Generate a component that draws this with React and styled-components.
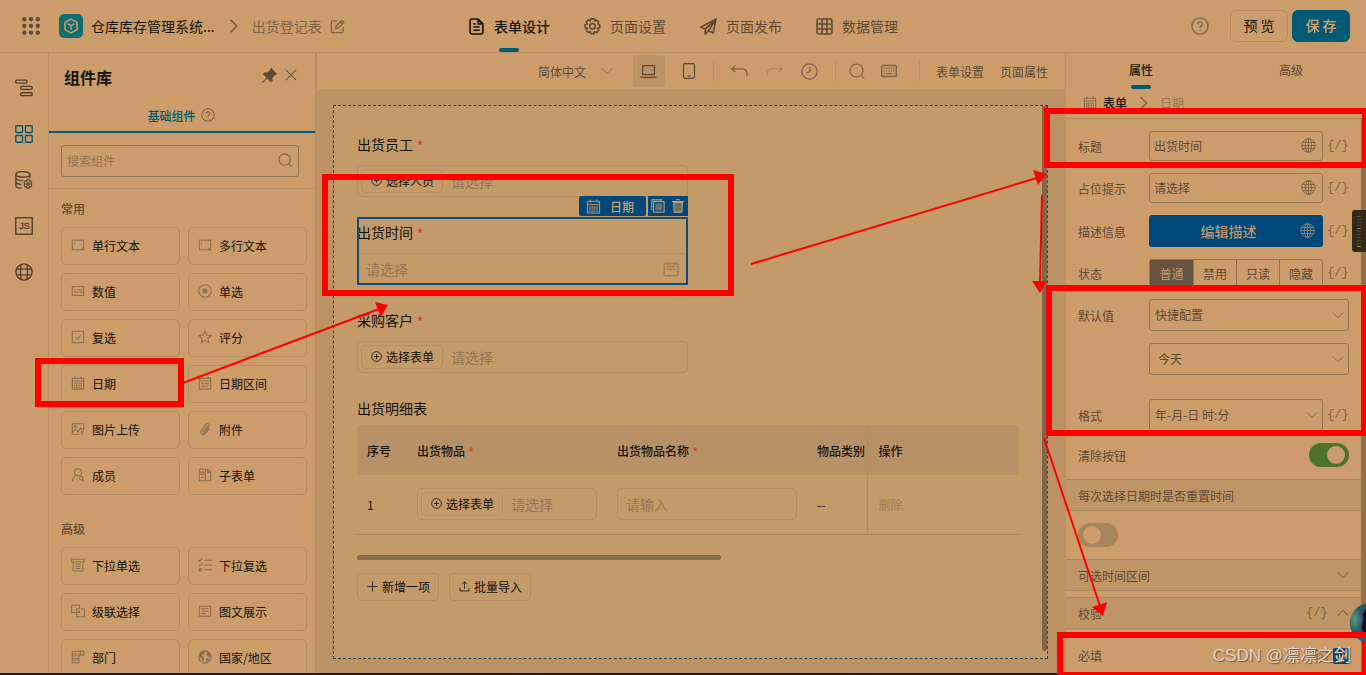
import React from "react";
import styled, { createGlobalStyle } from "styled-components";

const c = {
   panel: "#cc9d6a",
   shade: "#bd9264",
   canvas: "#c49a69",
   head: "#b99166",
   section: "#c09566",
   line: "#b98e60",
   lineDark: "#ad875b",
   border: "#b58c60",
   input: "#937551",
   text: "#15130f",
   sub: "#5e4a35",
   muted: "#806445",
   hint: "#977654",
   teal: "#005a73",
   blue: "#00477a",
   red: "#ff0000",
};

/* ---------- icons ---------- */

const shapes = {
   dots: [2, 8, 14].map((y) =>
      [2, 8, 14].map((x) => (
         <circle key={x + "-" + y} cx={x} cy={y} r="1.9" fill="currentColor" stroke="none" />
      ))
   ),
   cube: (
      <path d="M8 1.2 14 4.4v7.2L8 14.8 2 11.6V4.4zM4.500 5.600 8 7.600l3.500-2M8 7.600v4.200" strokeWidth="1.5" />
   ),
   right: <path d="m4 1 7 7-7 7" />,
   down: <path d="m2 5 6 6 6-6" />,
   up: <path d="m2 11 6-6 6 6" />,
   edit: <path d="M8 2H3a1.500 1.500 0 0 0-1.500 1.500V13A1.500 1.500 0 0 0 3 14.500h9.500A1.500 1.500 0 0 0 14 13V8.500M6 10.200l.5-2.700 6-6 2.200 2.200-6 6zM11 3l2.200 2.200" />,
   doc: <path d="M3 1h6.500L14 5.500V13.500A1.500 1.500 0 0 1 12.500 15h-9A1.500 1.500 0 0 1 2 13.500v-11A1.500 1.500 0 0 1 3 1zM9.500 1v4.500H14M5 5.500h2M5 8.500h6M5 11.500h6" />,
   gear: (
      <>
         <path d="M6.600.8h2.800l.6 1.800 1.700-.8 2 2-.8 1.700 1.900.8v2.800l-1.900.8.9 1.800-2 2-1.900-.9-.6 2H6.600l-.7-2-1.800.9-2-2 .9-1.800-2-.8V6.300l2-.8-.9-1.700 2-2 1.800.8z" />
         <circle cx="8" cy="7.800" r="2.600" />
      </>
   ),
   plane: <path d="M15 1 1 8.500l4 2V15l3-3 4.500 2zM5 10.500 15 1 8 12" />,
   grid: (
      <>
         <rect x="1" y="1" width="14" height="14" rx="1.500" />
         <path d="M1 5.700h14M1 10.300h14M5.700 1v14M10.300 1v14" />
      </>
   ),
   help: (
      <>
         <circle cx="8" cy="8" r="7.200" />
         <path d="M6 6.500a2 2 0 1 1 3 1.600c-.7.4-1 .8-1 1.600M8 11.300v1" />
      </>
   ),
   tree: (
      <>
         <rect x=".7" y="1" width="10" height="2.600" rx="1" />
         <rect x="5" y="6.600" width="10.300" height="2.600" rx="1" />
         <rect x="5" y="12.200" width="10.300" height="2.600" rx="1" />
      </>
   ),
   apps: (
      <>
         <rect x=".7" y=".7" width="6" height="6" rx=".6" />
         <rect x="9.300" y=".7" width="6" height="6" rx=".6" />
         <rect x=".7" y="9.300" width="6" height="6" rx=".6" />
         <rect x="9.300" y="9.300" width="6" height="6" rx=".6" />
      </>
   ),
   db: (
      <>
         <ellipse cx="7" cy="3" rx="6.200" ry="2.400" />
         <path d="M.8 3v10c0 1.200 2 2 5 2.200M13.200 3v3.500M.8 6.300c.4 1.300 3 2.200 6.200 2.200M.8 9.800c.4 1.200 2 2 4.700 2.200" />
         <circle cx="11.500" cy="11.500" r="1" />
         <path d="M10.700 7.800h1.600l.4 1.200 1.200-.3 1 1.500-.8 1.300.8 1.300-1 1.500-1.200-.3-.4 1.200h-1.600l-.4-1.200-1.200.3-1-1.500.8-1.300-.8-1.300 1-1.500 1.200.3z" strokeWidth="1" />
      </>
   ),
   js: (
      <>
         <rect x=".7" y=".7" width="14.600" height="14.600" />
         <text x="8.500" y="11" textAnchor="middle" fontSize="8" fontFamily="Liberation Sans, sans-serif" fill="currentColor" strokeWidth=".3">
            JS
         </text>
      </>
   ),
   globe: (
      <>
         <circle cx="8" cy="8" r="7.200" />
         <ellipse cx="8" cy="8" rx="3.400" ry="7.200" />
         <path d="M8 .8v14.400M1.600 4.800h12.800M.8 8h14.400M1.600 11.200h12.800" />
      </>
   ),
   web: (
      <>
         <circle cx="8" cy="8" r="7.200" />
         <path d="M5.500 1.200c-1 4.500-1 9 0 13.600M10.500 1.200c1 4.500 1 9 0 13.600M1.300 5.500h13.400M1.300 10.500h13.400" />
      </>
   ),
   pin: (
      <path fill="currentColor" d="M9.500 1 15 6.500l-1.500.6-3 3 .2 3L9.300 14 6 10.600 1.500 14.800l-.4-.3L5.300 10 2 6.700l1-1.300 3 .1 3-3z" strokeWidth=".4" />
   ),
   close: <path d="m2 2 12 12M14 2 2 14" />,
   search: (
      <>
         <circle cx="7.500" cy="7.500" r="6.500" />
         <path d="m12.300 12.300 3 3" />
      </>
   ),
   textbox: (
      <>
         <rect x="1.500" y="2.500" width="13" height="11" />
         <path d="M4 5v3M13.500 10.500v2h-2z" strokeWidth=".8" />
      </>
   ),
   number: (
      <>
         <rect x="1.500" y="3" width="13" height="10" />
         <text x="8" y="10.200" textAnchor="middle" fontSize="6" fontFamily="Liberation Sans, sans-serif" fill="currentColor" strokeWidth=".2">
            123
         </text>
      </>
   ),
   radio: (
      <>
         <circle cx="8" cy="8" r="7.200" />
         <circle cx="8" cy="8" r="2.800" fill="currentColor" stroke="none" />
      </>
   ),
   check: (
      <>
         <rect x="1.500" y="1.500" width="13" height="13" />
         <path d="m5 8 2.300 2.500 4-4.500" />
      </>
   ),
   star: <path d="m8 1.200 2 4.500 5 .5-3.700 3.300 1 4.900L8 11.900l-4.300 2.500 1-4.900L1 6.200l5-.5z" />,
   calendar: (
      <>
         <path d="M1.500 2.500h13v12.500h-13zM1.500 5.700h13M4.500 .5v3M11.500 .5v3" />
         <path d="M4 7v7M6.700 7v7M9.300 7v7M12 7v7M3 8.500h10M3 10.700h10M3 13h10" strokeWidth=".6" />
      </>
   ),
   range: (
      <path d="M1.500 2.500h13v12.500h-13zM1.500 5.700h13M4.500 .5v3M11.500 .5v3M3.800 8.700h2M7.200 8.700h5M3.800 11.800h5M10.200 11.800h2" />
   ),
   image: (
      <>
         <path d="M10 14H1.500V2h13v7M1.500 11.500 5 8l3 3 3-4 2 2M12.700 15v-4.500M11 12l1.700-1.700 1.700 1.700" />
         <circle cx="5" cy="5" r="1.100" />
      </>
   ),
   clip: <path d="m11 4.500-5 6.500c-.7 1 .7 2 1.400 1.100l5-6.800c1.700-2.500-1.600-5-3.500-2.600L4 9.500c-2.300 3.400 2 6.700 4.600 3.500l4-5.200" />,
   member: (
      <>
         <circle cx="8" cy="5" r="4" />
         <path d="M1.500 15c.2-3 1.700-5 4-6M13 14l1.500 1" />
         <circle cx="11.800" cy="11.800" r="2" />
      </>
   ),
   subform: (
      <path d="M1.500 1.500h7v13h-7zM8.500 1.500h2.500l3.500 3.300v9.700h-6M11 1.500v3.300h3.500M3.500 4.500h3v3h-3zM3.500 10.500h3" />
   ),
   dropdown: <path d="M1 1.500h14v3H1zM2.500 4.500h11V14.800h-11zM5 7h6M5 9.500h6M5 12h6" />,
   dropmulti: (
      <>
         <path d="M7 2.500h9M7 8h9M7 13.500h9M.5 2l1.500 1.700L5 .8M.5 7.500 2 9.200l3-3" />
         <rect x="1.300" y="12.300" width="2.400" height="2.400" fill="currentColor" />
      </>
   ),
   cascade: <path d="M6.500 9.800H.7V1.500h9v4.200M11 5.700h4.300v8.800H6.500V5.700h2.700M6.500 9.800h3.200V7.500" />,
   article: <path d="M1.500 2.500h13v11.500h-13zM4 5.500h8M4 8.200h8M4 11h5" />,
   dept: <path d="M1.500 1.500h9v4.300h-9zM1.500 5.800h7.500v4.300h-7.500zM1.500 10.200h7.500v4.300h-7.500zM10.500 1.500h4.200v4.300h-4.200M3.500 3.600h2M3.500 8h2M3.500 12.300h2M12 3.600h1" />,
   earth: (
      <>
         <circle cx="8" cy="8" r="7" />
         <path fill="currentColor" stroke="none" d="M2 4.500 5.500 1.500 8 2.500 7 4.500 5 6l2 2.500-.5 4.500-2-1L4 9 1.200 7.500zM10 1.500l3.500 2.300L14.800 8l-2 .5L11 7l-1.500-2 1-1zM9.500 9l3 .5-.5 3-2 1.500-1-2.500z" />
      </>
   ),
   laptop: <path d="M2.500 2.500h11v8.500h-11zM.5 13.500h15" />,
   tablet: (
      <>
         <rect x="2.500" y=".7" width="11" height="14.600" rx="1.200" />
         <path d="M6.500 13h3" />
      </>
   ),
   undo: <path d="M4 2.500.8 5.500 4 8.500M1 5.500h9.500a4.500 4.500 0 0 1 4.500 4.500v2.500" />,
   redo: <path d="M12 2.500l3.200 3-3.200 3M15 5.500H5.500A4.500 4.500 0 0 0 1 10v2.500" />,
   clock: (
      <>
         <circle cx="8" cy="8" r="7.200" />
         <path d="M8.500 3.500V8L5 9.500" />
      </>
   ),
   keyboard: (
      <>
         <rect x=".6" y="2.600" width="14.800" height="10.800" rx="1" strokeWidth="1.500" />
         <path strokeDasharray="1.400 1" d="M2.500 5.400h11M2.500 8h11M2.500 10.700h1.500" />
         <path d="M5 10.700h6M12 10.700h1.500" />
      </>
   ),
   copy: (
      <>
         <path d="M13 1H1v12" />
         <rect x="3" y="3" width="12" height="12" />
         <rect x="5" y="5" width="8" height="8" fill="#66726f" stroke="none" />
      </>
   ),
   trash: (
      <>
         <path d="M3 4h10l-.6 11H3.600z" fill="#66726f" />
         <path d="M1 3h14M5.500 .8h5" />
      </>
   ),
   calfield: (
      <>
         <rect x="1.200" y="2.400" width="13.600" height="12.400" rx="1.500" />
         <path d="M4.500 1v3M11.500 1v3M4 5.500h8M4 8.200h5M10 8.200h2" />
      </>
   ),
   pluscircle: (
      <>
         <circle cx="8" cy="8" r="7" />
         <path d="M8 4.500v7M4.500 8h7" />
      </>
   ),
   plus: <path d="M8 .5v15M.5 8h15" />,
   upload: <path d="M8 11V1.500M4.500 4.500 8 1l3.500 3.500M1.500 10v4.500h13V10" />,
   tag: <path d="M1 2.500h13v11H1zM4 6h5v5H4zM9 9h3" />,
};

const Svg = styled.svg`
   flex: none;
   display: block;
   fill: none;
   stroke: currentColor;
   color: ${(props) => props.$color || "inherit"};
`;

const Icon = ({ name, size = 16, color, weight = 1.2 }) => (
   <Svg
      viewBox="0 0 16 16"
      width={size}
      height={size}
      strokeWidth={weight}
      $color={color}
      aria-hidden="true"
   >
      {shapes[name]}
   </Svg>
);

/* ---------- data ---------- */

const pages = [
   { icon: "doc", name: "表单设计", active: true },
   { icon: "gear", name: "页面设置" },
   { icon: "plane", name: "页面发布" },
   { icon: "grid", name: "数据管理" },
];

const rail = [
   { icon: "tree", name: "大纲树" },
   { icon: "apps", name: "组件库", active: true },
   { icon: "db", name: "数据源" },
   { icon: "js", name: "动作面板" },
   { icon: "web", name: "多语言" },
];

const groups = [
   {
      name: "常用",
      items: [
         ["textbox", "单行文本"],
         ["textbox", "多行文本"],
         ["number", "数值"],
         ["radio", "单选"],
         ["check", "复选"],
         ["star", "评分"],
         ["calendar", "日期"],
         ["range", "日期区间"],
         ["image", "图片上传"],
         ["clip", "附件"],
         ["member", "成员"],
         ["subform", "子表单"],
      ],
   },
   {
      name: "高级",
      items: [
         ["dropdown", "下拉单选"],
         ["dropmulti", "下拉复选"],
         ["cascade", "级联选择"],
         ["article", "图文展示"],
         ["dept", "部门"],
         ["earth", "国家/地区"],
      ],
   },
];

const states = ["普通", "禁用", "只读", "隐藏"];

/* ---------- page ---------- */

export default function App() {
   return (
      <Screen>
         <GlobalStyle />
         <TopBar />
         <Workspace>
            <Rail>
               {rail.map((item) => (
                  <RailButton key={item.icon} $active={item.active} aria-label={item.name}>
                     <Icon name={item.icon} size={18} />
                  </RailButton>
               ))}
            </Rail>
            <Library />
            <Center>
               <Toolbar />
               <Stage>
                  <FormCanvas />
               </Stage>
            </Center>
            <Properties />
         </Workspace>
         <Taskbar />
         <Marks />
         <Watermark>CSDN @凛凛之剑</Watermark>
      </Screen>
   );
}

function TopBar() {
   return (
      <Header>
         <Crumbs>
            <Icon name="dots" size={18} color={c.sub} />
            <Logo>
               <Icon name="cube" size={16} />
            </Logo>
            <AppName href="#app">仓库库存管理系统...</AppName>
            <Icon name="right" size={14} color={c.muted} weight={2} />
            <PageName>出货登记表</PageName>
            <Icon name="edit" size={15} color={c.muted} weight={1.4} />
         </Crumbs>
         <PageNav>
            {pages.map((page) => (
               <PageLink key={page.name} href="#page" $active={page.active}>
                  <Icon name={page.icon} size={17} weight={1.5} />
                  {page.name}
               </PageLink>
            ))}
         </PageNav>
         <Actions>
            <HelpButton aria-label="帮助">
               <Icon name="help" size={18} />
            </HelpButton>
            <ActionButton>预 览</ActionButton>
            <ActionButton $primary>保 存</ActionButton>
         </Actions>
      </Header>
   );
}

function Library() {
   return (
      <LibraryPanel>
         <LibraryHead>
            <LibraryTitle>组件库</LibraryTitle>
            <BareButton aria-label="固定">
               <Icon name="pin" size={17} />
            </BareButton>
            <BareButton aria-label="关闭">
               <Icon name="close" size={14} />
            </BareButton>
         </LibraryHead>
         <LibraryTab>
            基础组件
            <Icon name="help" size={14} color={c.muted} />
         </LibraryTab>
         <SearchArea>
            <SearchBox>
               <input aria-label="搜索组件" placeholder="搜索组件" />
               <Icon name="search" size={14} color={c.muted} />
            </SearchBox>
         </SearchArea>
         {groups.map((group) => (
            <Group key={group.name}>
               <GroupName>{group.name}</GroupName>
               <Cards>
                  {group.items.map(([icon, name]) => (
                     <Card key={name}>
                        <Icon name={icon} size={14} color="#8c6e4d" />
                        {name}
                     </Card>
                  ))}
               </Cards>
            </Group>
         ))}
      </LibraryPanel>
   );
}

function Toolbar() {
   return (
      <Tools>
         <Language>
            <select aria-label="语言">
               <option>简体中文</option>
            </select>
            <Icon name="down" size={14} color={c.muted} weight={1} />
         </Language>
         <ToolGroup $gap={8}>
            <ToolButton $width={32} $active aria-label="电脑">
               <Icon name="laptop" size={17} />
            </ToolButton>
            <ToolButton $width={32} aria-label="平板">
               <Icon name="tablet" size={16} />
            </ToolButton>
         </ToolGroup>
         <Divider />
         <ToolGroup>
            <ToolButton $width={35} $color={c.muted} aria-label="撤销">
               <Icon name="undo" size={17} />
            </ToolButton>
            <ToolButton $width={35} $color="#b38a5e" aria-label="重做">
               <Icon name="redo" size={17} />
            </ToolButton>
            <ToolButton $width={35} $color={c.muted} aria-label="历史">
               <Icon name="clock" size={17} />
            </ToolButton>
         </ToolGroup>
         <Divider />
         <ToolGroup $gap={6} $end={9}>
            <ToolButton $width={26} $color={c.muted} aria-label="搜索">
               <Icon name="search" size={16} />
            </ToolButton>
            <ToolButton $width={26} $color={c.muted} aria-label="快捷键">
               <Icon name="keyboard" size={16} />
            </ToolButton>
         </ToolGroup>
         <Divider />
         <ToolText>表单设置</ToolText>
         <ToolText>页面属性</ToolText>
      </Tools>
   );
}

function PickField({ id, action, hint = "请选择" }) {
   return (
      <FieldBox>
         <SmallButton $short>
            <Icon name="pluscircle" size={11} />
            {action}
         </SmallButton>
         <input id={id} placeholder={hint} />
      </FieldBox>
   );
}

function FormCanvas() {
   return (
      <Canvas>
         <FormBody>
            <Field>
               <FieldLabel htmlFor="staff">
                  出货员工 <Star />
               </FieldLabel>
               <PickField id="staff" action="选择人员" />
            </Field>
            <Field $selected>
               <FieldTools>
                  <FieldTag>
                     <Icon name="calendar" size={15} weight={1} />
                     日期
                  </FieldTag>
                  <FieldActions>
                     <BareButton type="button" aria-label="复制">
                        <Icon name="copy" size={14} />
                     </BareButton>
                     <BareButton type="button" aria-label="删除组件">
                        <Icon name="trash" size={14} />
                     </BareButton>
                  </FieldActions>
               </FieldTools>
               <FieldLabel htmlFor="time">
                  出货时间 <Star />
               </FieldLabel>
               <FieldBox>
                  <input id="time" placeholder="请选择" />
                  <Icon name="calfield" size={16} color="#a17e57" weight={1.5} />
               </FieldBox>
            </Field>
            <Field>
               <FieldLabel htmlFor="client">
                  采购客户 <Star />
               </FieldLabel>
               <PickField id="client" action="选择表单" />
            </Field>
            <FieldLabel as="div">出货明细表</FieldLabel>
            <Table>
               <colgroup>
                  <col width="50" />
                  <col width="200" />
                  <col width="200" />
                  <col width="60" />
                  <col />
               </colgroup>
               <thead>
                  <tr>
                     <th>序号</th>
                     <th>
                        出货物品 <Star />
                     </th>
                     <th>
                        出货物品名称 <Star />
                     </th>
                     <th>物品类别</th>
                     <th>操作</th>
                  </tr>
               </thead>
               <tbody>
                  <tr>
                     <td>1</td>
                     <td>
                        <CellField>
                           <PickField id="goods" action="选择表单" />
                        </CellField>
                     </td>
                     <td>
                        <CellField>
                           <FieldBox>
                              <input aria-label="出货物品名称" placeholder="请输入" />
                           </FieldBox>
                        </CellField>
                     </td>
                     <td>--</td>
                     <td>
                        <RowAction type="button">删除</RowAction>
                     </td>
                  </tr>
               </tbody>
            </Table>
            <TableScroll />
            <TableButtons>
               <SmallButton>
                  <Icon name="plus" size={11} />
                  新增一项
               </SmallButton>
               <SmallButton>
                  <Icon name="upload" size={11} />
                  批量导入
               </SmallButton>
            </TableButtons>
         </FormBody>
         <CanvasScroll />
      </Canvas>
   );
}

function Properties() {
   return (
      <PropsPanel>
         <Tabs>
            <Tab $active>属性</Tab>
            <Tab>高级</Tab>
         </Tabs>
         <Path>
            <Icon name="calendar" size={14} weight={1} color={c.muted} />
            <strong>表单</strong>
            <Icon name="right" size={14} weight={1.8} color={c.muted} />
            <span>日期</span>
         </Path>
         <PropsScroll>
            <PropsContent>
               <PropList>
                  <Prop>
                     <label htmlFor="title">标题</label>
                     <TextBox>
                        <input id="title" defaultValue="出货时间" />
                        <Icon name="globe" size={15} weight={1} color={c.muted} />
                     </TextBox>
                     <Code>{"{/}"}</Code>
                  </Prop>
                  <Prop>
                     <label htmlFor="hint">占位提示</label>
                     <TextBox>
                        <input id="hint" defaultValue="请选择" />
                        <Icon name="globe" size={15} weight={1} color={c.muted} />
                     </TextBox>
                     <Code>{"{/}"}</Code>
                  </Prop>
                  <Prop>
                     <label htmlFor="desc">描述信息</label>
                     <DescButton id="desc">
                        <span>编辑描述</span>
                        <Icon name="globe" size={15} weight={1} color="#7e8478" />
                     </DescButton>
                     <Code>{"{/}"}</Code>
                  </Prop>
                  <Prop>
                     <PropName>状态</PropName>
                     <Segments>
                        {states.map((name, i) => (
                           <Segment key={name} $active={i === 0} aria-pressed={i === 0}>
                              {name}
                           </Segment>
                        ))}
                     </Segments>
                     <Code>{"{/}"}</Code>
                  </Prop>
                  <Prop>
                     <label htmlFor="default">默认值</label>
                     <SelectBox>
                        <select id="default">
                           <option>快捷配置</option>
                        </select>
                        <Icon name="down" size={14} weight={1} color={c.muted} />
                     </SelectBox>
                  </Prop>
                  <Prop>
                     <PropName />
                     <SelectBox $indent={8}>
                        <select aria-label="默认日期">
                           <option>今天</option>
                        </select>
                        <Icon name="down" size={14} weight={1} color={c.muted} />
                     </SelectBox>
                  </Prop>
                  <Prop $space>
                     <label htmlFor="format">格式</label>
                     <SelectBox>
                        <select id="format">
                           <option>年-月-日 时:分</option>
                        </select>
                        <Icon name="down" size={14} weight={1} color={c.muted} />
                     </SelectBox>
                     <Code>{"{/}"}</Code>
                  </Prop>
                  <Prop $spread>
                     <label htmlFor="clear">清除按钮</label>
                     <Switch id="clear" type="checkbox" role="switch" defaultChecked />
                  </Prop>
               </PropList>
               <Section>
                  <label htmlFor="reset">每次选择日期时是否重置时间</label>
               </Section>
               <SwitchRow>
                  <Switch id="reset" type="checkbox" role="switch" />
               </SwitchRow>
               <Section>
                  可选时间区间
                  <Icon name="down" size={14} weight={1.2} color={c.muted} />
               </Section>
               <Section $space>
                  校验
                  <SectionTools>
                     <Code>{"{/}"}</Code>
                     <Icon name="up" size={14} weight={1.2} color={c.muted} />
                  </SectionTools>
               </Section>
               <Required>
                  <label htmlFor="required">必填</label>
                  <Icon name="tag" size={16} weight={1} color={c.muted} />
                  <CheckBox id="required" type="checkbox" defaultChecked />
               </Required>
            </PropsContent>
            <PropsBar />
         </PropsScroll>
      </PropsPanel>
   );
}

// red boxes and arrows drawn over the page, plus the two floating widgets on the right edge
function Marks() {
   return (
      <Overlay width="1366" height="675" viewBox="0 0 1366 675" aria-hidden="true">
         <defs>
            <radialGradient id="ball" cx="0.3" cy="0.55">
               <stop offset="0" stopColor="#5f9687" />
               <stop offset="1" stopColor="#1f5763" />
            </radialGradient>
         </defs>
         <rect x="1352" y="210" width="20" height="42" rx="3" fill="#33281d" />
         {[216, 219, 222, 225, 231, 234, 237, 240, 243].map((y) => (
            <path key={y} d={`M1357 ${y}.5h4`} stroke="#5a4733" />
         ))}
         <path d="M1357 228.500h4" stroke="#d0701c" />
         <path d="M1357 246.500h4" stroke="#7fa01e" />
         <g fill="none" stroke={c.red} strokeWidth="6">
            <rect x="38" y="361" width="143" height="43" />
            <rect x="325" y="177" width="406" height="116" />
            <rect x="1047" y="111" width="318" height="54" />
            <rect x="1049" y="288" width="315" height="145" />
            <rect x="1060" y="635" width="305" height="40" />
         </g>
         <path d="M1366 603.400A20 20 0 0 0 1352 632h14z" fill="url(#ball)" />
         <path d="M1357 638q5 5 9 4v-4z" fill="#2c5a68" />
         <path d="M1366 609q-4 3-3 9l-2 8 2 6h3z" fill="#120c1c" />
         <path d="M1363 611q-1 5 0 8l-2 8" stroke="#6a2a7a" fill="none" />
         <g stroke={c.red} strokeWidth="2" fill="none">
            <path d="M183 383 379 309" />
            <path d="M751 264 1037 178" />
            <path d="M1042 195 1040 283" />
            <path d="M1044 438 1100 606" />
         </g>
         <g fill={c.red}>
            <path d="M388 305 375 302 381 317z" />
            <path d="M1047 174 1033 170 1038 185z" />
            <path d="M1040 293 1032 281h15z" />
            <path d="M1103 616 1092 607 1107 602z" />
         </g>
      </Overlay>
   );
}

const Star = () => <Asterisk>*</Asterisk>;

/* ---------- styles ---------- */

const GlobalStyle = createGlobalStyle`
   * {
      box-sizing: border-box;
   }

   body {
      margin: 0;
      overflow: hidden;
      background: ${c.panel};
   }

   body, button, input, select {
      font-family: "Noto Sans CJK SC", sans-serif;
      font-size: 12px;
      color: ${c.sub};
   }

   button {
      padding: 0;
      border: 0;
      background: none;
      cursor: pointer;
      white-space: nowrap;
   }

   input, select {
      min-width: 0;
      padding: 0;
      border: 0;
      outline: 0;
      background: none;
      appearance: none;
   }

   input::placeholder {
      color: ${c.hint};
      opacity: 1;
   }

   a {
      color: inherit;
      text-decoration: none;
   }
`;

const Screen = styled.div`
   position: relative;
   display: flex;
   flex-direction: column;
   height: 100vh;
   overflow: hidden;
`;

const Header = styled.header`
   flex: none;
   display: grid;
   grid-template-columns: 1fr auto 1fr;
   height: 53px;
   border-bottom: 1px solid ${c.line};
   font-size: 14px;
`;

const Crumbs = styled.div`
   display: flex;
   align-items: center;
   padding-left: 22px;
   gap: 8px;
`;

const Logo = styled.span`
   display: grid;
   place-items: center;
   width: 24px;
   height: 24px;
   margin-left: 11px;
   border-radius: 5px;
   color: ${c.panel};
   background: #0f6e70;
`;

const AppName = styled.a`
   margin-right: 4px;
   color: ${c.text};
`;

const PageName = styled.span`
   margin-left: 3px;
   color: ${c.muted};
`;

const PageNav = styled.nav`
   display: flex;
   gap: 34px;
`;

const PageLink = styled.a`
   position: relative;
   display: flex;
   align-items: center;
   gap: 9px;
   color: ${(props) => (props.$active ? c.text : c.sub)};
   font-weight: ${(props) => (props.$active ? 500 : 400)};

   &::after {
      content: "";
      display: ${(props) => (props.$active ? "block" : "none")};
      position: absolute;
      bottom: 0;
      left: calc(50% - 10px);
      width: 20px;
      height: 4px;
      border-radius: 2px;
      background: ${c.teal};
   }
`;

const Actions = styled.div`
   display: flex;
   align-items: center;
   justify-content: flex-end;
   gap: 4px;
   padding-right: 16px;
`;

const HelpButton = styled.button`
   margin-right: 17px;
   color: ${c.muted};
`;

const ActionButton = styled.button`
   width: 58px;
   height: 32px;
   padding-bottom: 2px;
   border: 1px solid ${(props) => (props.$primary ? c.teal : c.border)};
   border-radius: 6px;
   font-size: 14px;
   font-weight: ${(props) => (props.$primary ? 500 : 400)};
   color: ${(props) => (props.$primary ? "#d3a674" : c.text)};
   background: ${(props) => (props.$primary ? c.teal : "none")};
`;

const Workspace = styled.div`
   flex: 1;
   min-height: 0;
   display: flex;
`;

const Rail = styled.nav`
   flex: none;
   width: 49px;
   padding-top: 12px;
   border-right: 1px solid ${c.line};
`;

const RailButton = styled.button`
   display: grid;
   place-items: center;
   width: 48px;
   height: 46px;
   color: ${(props) => (props.$active ? c.teal : "#4f3e2e")};
`;

const LibraryPanel = styled.aside`
   flex: none;
   width: 268px;
   overflow: hidden;
   border-right: 2px solid ${c.line};
`;

const LibraryHead = styled.div`
   display: flex;
   align-items: center;
   gap: 6px;
   height: 46px;
   padding: 0 17px 2px 15px;
`;

const LibraryTitle = styled.h2`
   flex: 1;
   margin: 0;
   padding-top: 4px;
   font-size: 16px;
   font-weight: 700;
   color: ${c.text};
`;

const BareButton = styled.button`
   color: inherit;
`;

const LibraryTab = styled.button`
   display: flex;
   align-items: center;
   justify-content: center;
   gap: 5px;
   width: 100%;
   height: 34px;
   padding-right: 2px;
   border-bottom: 2px solid ${c.teal};
   font-weight: 500;
   color: ${c.teal};
`;

const SearchArea = styled.div`
   padding: 12px 16px 11px 12px;
   border-bottom: 1px solid ${c.line};
`;

const SearchBox = styled.div`
   display: flex;
   align-items: center;
   height: 32px;
   padding: 0 6px 2px 5px;
   border: 1px solid ${c.input};
   border-radius: 3px;

   input {
      flex: 1;
   }
`;

const Group = styled.section`
   padding: 8px 8px 14px 12px;
`;

const GroupName = styled.h3`
   margin: 0;
   padding-bottom: 6px;
   font-size: 12px;
   font-weight: 500;
   line-height: 24px;
`;

const Cards = styled.div`
   display: grid;
   grid-template-columns: 1fr 1fr;
   gap: 8px;
`;

const Card = styled.button`
   display: flex;
   align-items: center;
   gap: 7px;
   height: 38px;
   padding: 0 9px 2px;
   border: 1px solid ${c.border};
   border-radius: 5px;
   color: ${c.text};
`;

const Center = styled.main`
   flex: 1;
   min-width: 0;
   display: flex;
   flex-direction: column;
`;

const Tools = styled.div`
   flex: none;
   display: flex;
   align-items: center;
   justify-content: flex-end;
   height: 36px;
   padding-right: 17px;
`;

const Language = styled.div`
   display: flex;
   align-items: center;
   padding-right: 19px;

   select {
      width: 62px;
   }
`;

const ToolGroup = styled.div`
   display: flex;
   gap: ${(props) => props.$gap || 0}px;
   padding-right: ${(props) => props.$end || 0}px;
`;

const ToolButton = styled.button`
   display: grid;
   place-items: center;
   width: ${(props) => props.$width}px;
   height: 32px;
   border-radius: 3px;
   color: ${(props) => props.$color || c.sub};
   background: ${(props) => (props.$active ? c.shade : "none")};
`;

const Divider = styled.span`
   width: 1px;
   height: 20px;
   margin: 0 8px;
   background: ${c.line};
`;

const ToolText = styled.button`
   padding-left: 8px;

   & + & {
      padding-left: 16px;
   }
`;

const Stage = styled.div`
   flex: 1;
   min-height: 0;
   display: flex;
   padding: 16px 17px 14px 16px;
   background: ${c.shade};
`;

const Canvas = styled.div`
   flex: 1;
   min-width: 0;
   display: flex;
   overflow: hidden;
   border: 1px dashed #1c4a66;
   background: ${c.canvas};
`;

const FormBody = styled.form`
   flex: 1;
   min-width: 0;
   padding: 23px 23px 0;
`;

const CanvasScroll = styled.div`
   flex: none;
   width: 5px;
   margin-bottom: 7px;
   border-radius: 0 0 3px 3px;
   background: #80664b;
`;

const Field = styled.div`
   position: relative;
   width: 50%;
   margin-bottom: 20px;

   &::after {
      content: "";
      display: ${(props) => (props.$selected ? "block" : "none")};
      position: absolute;
      inset: 0;
      border: 2px solid #104e78;
      pointer-events: none;
   }
`;

const FieldLabel = styled.label`
   display: block;
   height: 36px;
   font-size: 14px;
   line-height: 30px;
   color: ${c.text};

   & + table {
      margin-top: -4px;
   }
`;

const Asterisk = styled.span`
   margin-left: 1px;
   color: #cc3a24;
   font-weight: 400;
   font-family: "Liberation Sans", sans-serif;
`;

const FieldBox = styled.div`
   display: flex;
   align-items: center;
   gap: 8px;
   height: 32px;
   padding: 0 8px 0 3px;
   border: 1px solid ${c.border};
   border-radius: 5px;

   input {
      flex: 1;
      font-size: 14px;
   }

   input:first-child {
      padding-left: 5px;
   }
`;

const SmallButton = styled.button.attrs({ type: "button" })`
   flex: none;
   display: flex;
   align-items: center;
   gap: 4px;
   height: ${(props) => (props.$short ? 24 : 28)}px;
   padding: 0 8px 1px 9px;
   border: 1px solid ${c.border};
   border-radius: 5px;
   color: ${c.text};
`;

const FieldTools = styled.div`
   position: absolute;
   right: 0;
   bottom: calc(100% + 1px);
   z-index: 1;
   display: flex;
   gap: 2px;
   height: 20px;
   color: ${c.panel};
`;

const FieldTag = styled.span`
   display: flex;
   align-items: center;
   gap: 9px;
   padding: 0 12px 0 7px;
   border-radius: 2px;
   font-weight: 500;
   background: ${c.blue};
`;

const FieldActions = styled.span`
   display: flex;
   align-items: center;
   gap: 6px;
   padding: 0 3px;
   background: ${c.blue};
`;

const Table = styled.table`
   width: 100%;
   table-layout: fixed;
   border-collapse: collapse;
   color: ${c.text};

   th {
      height: 50px;
      text-align: left;
      font-weight: 500;
      background: ${c.head};
   }

   td {
      height: 59px;
      border-bottom: 1px solid ${c.lineDark};
   }

   th,
   td {
      padding: 0 0 0 10px;
      white-space: nowrap;
   }

   th:last-child,
   td:last-child {
      padding-left: 11px;
      border-left: 1px solid #b38a5e;
   }
`;

const CellField = styled.div`
   width: 180px;
`;

const RowAction = styled.button`
   color: #a07d57;
`;

const TableScroll = styled.div`
   width: 55%;
   height: 5px;
   margin: 20px 0 13px;
   border-radius: 3px;
   background: #8a6c4d;
`;

const TableButtons = styled.div`
   display: flex;
   gap: 10px;
`;

const PropsPanel = styled.aside`
   flex: none;
   display: flex;
   flex-direction: column;
   width: 301px;
   border-left: 1px solid ${c.line};
`;

const Tabs = styled.div`
   flex: none;
   display: grid;
   grid-template-columns: 1fr 1fr;
   height: 36px;
`;

const Tab = styled.button`
   display: flex;
   flex-direction: column;
   align-items: center;
   justify-content: space-between;
   padding-top: 8px;
   font-weight: ${(props) => (props.$active ? 500 : 400)};
   color: ${(props) => (props.$active ? c.text : c.sub)};

   &::after {
      content: "";
      width: 20px;
      height: 4px;
      border-radius: 2px;
      background: ${(props) => (props.$active ? c.teal : "none")};
   }
`;

const Path = styled.div`
   flex: none;
   display: flex;
   align-items: center;
   gap: 6px;
   height: 30px;
   padding: 0 0 2px 17px;
   border-bottom: 1px solid ${c.lineDark};
   color: ${c.hint};

   strong {
      margin-right: 4px;
      font-weight: 500;
      color: ${c.text};
   }

   span {
      margin-left: 3px;
   }
`;

const PropsScroll = styled.div`
   flex: 1;
   min-height: 0;
   display: flex;
   overflow: hidden;
`;

const PropsContent = styled.div`
   flex: 1;
`;

const PropsBar = styled.div`
   flex: none;
   width: 5px;
   background: #8f714f;
`;

const PropList = styled.div`
   display: flex;
   flex-direction: column;
   gap: 12px;
   padding: 12px;
`;

const Prop = styled.div`
   display: flex;
   align-items: center;
   justify-content: ${(props) => (props.$spread ? "space-between" : "flex-start")};
   margin-top: ${(props) => (props.$space ? 12 : 0)}px;

   label {
      flex: none;
      width: 71px;
   }
`;

const PropName = styled.span`
   flex: none;
   width: 71px;
`;

const TextBox = styled.div`
   flex: 1;
   min-width: 0;
   display: flex;
   align-items: center;
   height: 30px;
   padding: 0 6px 1px 4px;
   border: 1px solid ${c.input};
   border-radius: 3px;

   input {
      flex: 1;
   }
`;

const Code = styled.span`
   flex: none;
   width: 26px;
   padding-left: 4px;
   font-family: "Liberation Mono", monospace;
   font-size: 12px;
   line-height: 16px;
   color: ${c.muted};
`;

const DescButton = styled.button`
   flex: 1;
   display: flex;
   align-items: center;
   height: 32px;
   padding: 0 8px 1px 0;
   border-radius: 3px;
   font-size: 14px;
   font-weight: 500;
   color: #bb9469;
   background: ${c.blue};

   span {
      flex: 1;
      padding-left: 8px;
   }
`;

const Segments = styled.div`
   flex: 1;
   display: grid;
   grid-template-columns: repeat(4, 1fr);
   height: 28px;
   border: 1px solid ${c.input};
   border-radius: 3px;
`;

const Segment = styled.button`
   color: ${(props) => (props.$active ? "#c4986a" : c.sub)};
   background: ${(props) => (props.$active ? "#665440" : "none")};

   & + & {
      border-left: 1px solid ${c.input};
   }
`;

const SelectBox = styled.div`
   flex: 1;
   min-width: 0;
   display: flex;
   align-items: center;
   height: 32px;
   padding: 0 3px 1px ${(props) => props.$indent || 5}px;
   border: 1px solid ${c.input};
   border-radius: 3px;

   select {
      flex: 1;
   }
`;

const Switch = styled.input`
   width: 40px;
   height: 24px;
   margin: 0;
   border-radius: 12px;
   background: #a7845a;

   &::before {
      content: "";
      display: block;
      width: 18px;
      height: 18px;
      margin: 3px 5px;
      border-radius: 50%;
      background: ${c.panel};
   }

   &:checked {
      background: #4e7526;
   }

   &:checked::before {
      margin-left: 18px;
   }
`;

const Section = styled.div`
   display: flex;
   align-items: center;
   justify-content: space-between;
   height: 32px;
   margin-top: ${(props) => (props.$space ? 6 : 0)}px;
   padding: 0 11px 0 12px;
   border-top: 1px solid ${c.lineDark};
   border-bottom: 1px solid ${c.lineDark};
   background: ${c.section};
`;

const SectionTools = styled.span`
   display: flex;
   align-items: center;
   gap: 8px;
`;

const SwitchRow = styled.div`
   display: flex;
   padding: 12px;
`;

const Required = styled.div`
   display: flex;
   align-items: center;
   gap: 4px;
   padding: 18px 12px;

   label {
      flex: 1;
   }
`;

const CheckBox = styled.input`
   width: 16px;
   height: 16px;
   margin: 0;
   border-radius: 2px;
   background: ${c.blue};

   &:checked::before {
      content: "";
      display: block;
      width: 5px;
      height: 9px;
      margin: 2px 5px;
      border: solid ${c.panel};
      border-width: 0 2px 2px 0;
      transform: rotate(45deg);
   }
`;

const Taskbar = styled.footer`
   flex: none;
   height: 2px;
   background: #1f1e13;
`;

const Overlay = styled.svg`
   position: absolute;
   top: 0;
   left: 0;
   pointer-events: none;
`;

const Watermark = styled.span`
   position: absolute;
   right: 15px;
   bottom: 6px;
   font-family: "Liberation Sans", "Noto Sans CJK SC", sans-serif;
   font-size: 17px;
   line-height: 26px;
   color: #e2d3c2;
   text-shadow: 1px 1px 1px #6b5238;
   pointer-events: none;
`;
